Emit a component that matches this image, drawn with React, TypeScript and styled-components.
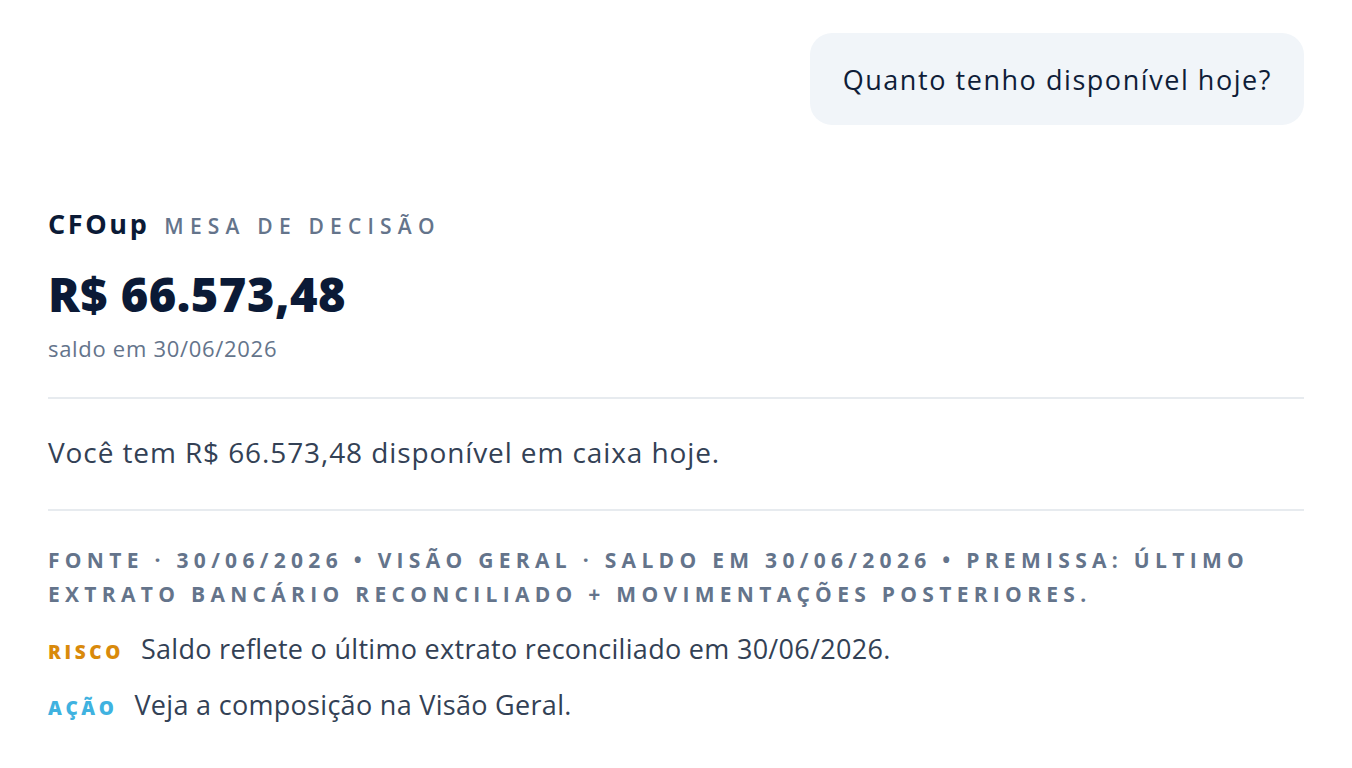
import React from 'react';
import styled, { createGlobalStyle } from 'styled-components';

const FONT = "'Open Sans', 'Liberation Sans', sans-serif";

const GlobalStyle = createGlobalStyle`
  html, body {
    margin: 0;
    padding: 0;
    background: #ffffff;
  }
  body {
    font-family: ${FONT};
    color: #0f1d38;
  }
`;

const Page = styled.div`
  width: 1352px;
  height: 768px;
  box-sizing: border-box;
  padding: 33px 48px 0 48px;
  display: flex;
  flex-direction: column;
  overflow: hidden;
`;

const UserRow = styled.div`
  display: flex;
  justify-content: flex-end;
`;

const Bubble = styled.div`
  background: #f1f5f9;
  border-radius: 22px;
  height: 92px;
  box-sizing: border-box;
  padding: 0 32px 0 33px;
  display: flex;
  align-items: center;
  font-size: 27px;
  color: #0f1d38;
  letter-spacing: 1.55px;
`;

const Answer = styled.section`
  margin-top: 80px;
  display: flex;
  flex-direction: column;
`;

const Header = styled.div`
  display: flex;
  align-items: baseline;
  gap: 15px;
  height: 30px;
`;

const Brand = styled.span`
  font-size: 27px;
  font-weight: 700;
  color: #0b1a36;
  letter-spacing: 2.6px;
`;

const Kicker = styled.span`
  font-size: 21px;
  font-weight: 600;
  color: #64748b;
  letter-spacing: 6.2px;
  text-transform: uppercase;
`;

const Amount = styled.div`
  margin-top: 36px;
  font-size: 47px;
  font-weight: 800;
  color: #0b1a36;
  line-height: 1;
  letter-spacing: 0.5px;
`;

const AmountNote = styled.div`
  margin-top: 16px;
  font-size: 22px;
  color: #64748b;
  line-height: 28px;
  letter-spacing: 0.7px;
`;

const Rule = styled.div<{ $top: number }>`
  height: 2px;
  background: #e7ebef;
  margin-top: ${p => p.$top}px;
`;

const Summary = styled.p`
  margin: 36px 0 0 0;
  font-size: 28px;
  line-height: 34px;
  color: #334155;
  letter-spacing: 0.9px;
`;

const Sources = styled.p`
  margin: 32px 0 0 0;
  font-size: 21px;
  line-height: 34px;
  font-weight: 700;
  letter-spacing: 5.3px;
  color: #64748b;
  text-transform: uppercase;
`;

const Note = styled.div<{ $top: number }>`
  margin-top: ${p => p.$top}px;
  display: flex;
  align-items: baseline;
  gap: 17px;
`;

const Tag = styled.span<{ $tone: 'risk' | 'action' }>`
  font-size: 19px;
  font-weight: 800;
  letter-spacing: 3.6px;
  color: ${p => (p.$tone === 'risk' ? '#d98a0b' : '#3fb2e0')};
`;

const NoteText = styled.span`
  font-size: 27px;
  line-height: 34px;
  color: #334155;
  letter-spacing: 0.3px;
`;

export default function App() {
  return (
    <>
      <GlobalStyle />
      <Page>
        <UserRow>
          <Bubble>Quanto tenho disponível hoje?</Bubble>
        </UserRow>
        <Answer>
          <Header>
            <Brand>CFOup</Brand>
            <Kicker>Mesa de decisão</Kicker>
          </Header>
          <Amount>R$ 66.573,48</Amount>
          <AmountNote>saldo em 30/06/2026</AmountNote>
          <Rule $top={35} />
          <Summary>Você tem R$ 66.573,48 disponível em caixa hoje.</Summary>
          <Rule $top={40} />
          <Sources>
            Fonte · 30/06/2026 • Visão Geral · Saldo em 30/06/2026 • Premissa: último extrato bancário
            reconciliado + movimentações posteriores.
          </Sources>
          <Note $top={21}>
            <Tag $tone="risk">RISCO</Tag>
            <NoteText>Saldo reflete o último extrato reconciliado em 30/06/2026.</NoteText>
          </Note>
          <Note $top={22}>
            <Tag $tone="action">AÇÃO</Tag>
            <NoteText>Veja a composição na Visão Geral.</NoteText>
          </Note>
        </Answer>
      </Page>
    </>
  );
}
